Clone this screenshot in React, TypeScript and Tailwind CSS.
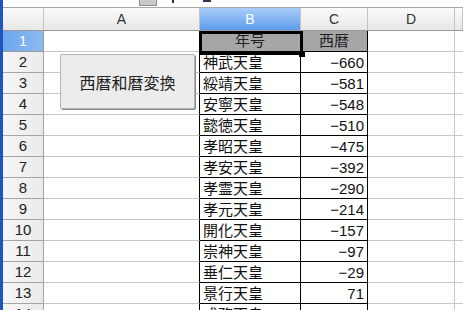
const rows: [string, string][] = [
  ["神武天皇", "−660"],
  ["綏靖天皇", "−581"],
  ["安寧天皇", "−548"],
  ["懿徳天皇", "−510"],
  ["孝昭天皇", "−475"],
  ["孝安天皇", "−392"],
  ["孝霊天皇", "−290"],
  ["孝元天皇", "−214"],
  ["開化天皇", "−157"],
  ["崇神天皇", "−97"],
  ["垂仁天皇", "−29"],
  ["景行天皇", "71"],
  ["成務天皇", "131"],
];

const hdr =
  "h-full flex items-center justify-center border-r border-[#c4c4c4] bg-gradient-to-b from-[#fbfbfb] to-[#e7e7e7] text-[14px] text-[#333]";

export default function App() {
  return (
    <div className="relative w-[463px] h-[310px] overflow-hidden bg-white flex font-['Liberation_Sans','Noto_Sans_CJK_JP',sans-serif]">
      <div className="w-[3px] shrink-0 bg-[#1f55bd]" />
      <div className="flex-1 flex flex-col">
        {/* cut-off toolbar */}
        <div className="relative h-[8px] shrink-0 border-b border-[#a8a8a8] bg-white">
          <span className="absolute left-[136px] top-0 w-[18px] h-[6px] bg-[#c8c8c8] border border-[#8c8c8c] border-t-0" />
          <span className="absolute left-[169px] top-0 w-[2px] h-[3px] bg-[#333]" />
          <span className="absolute left-[200px] top-0 w-[8px] h-[2px] bg-[#2a3a55]" />
        </div>

        {/* column headers */}
        <div className="flex h-[23px] shrink-0 border-b border-[#9a9a9a]">
          <div className={`w-[41px] ${hdr}`} />
          <div className={`w-[156px] ${hdr}`}>A</div>
          <div className="w-[101px] h-full flex items-center justify-center border-r border-[#c4c4c4] bg-gradient-to-b from-[#a9cdf8] to-[#5d9cec] text-[14px] text-white">
            B
          </div>
          <div className={`w-[67px] ${hdr}`}>C</div>
          <div className={`w-[87px] ${hdr}`}>D</div>
          <div className={`flex-1 ${hdr}`} />
        </div>

        {/* row 1 */}
        <div className="flex h-[21px] shrink-0">
          <div className="w-[41px] flex items-center justify-center border-r border-b border-[#9a9a9a] bg-gradient-to-r from-[#6fa6ee] to-[#8cbaf3] text-[15px] text-white">
            1
          </div>
          <div className="w-[156px] border-r border-b border-r-black border-b-[#c8c8c8]" />
          <div className="w-[101px] flex items-center justify-center bg-[#a6a6a6] border-r border-b border-black text-[15px] text-[#222]">
            年号
          </div>
          <div className="w-[67px] flex items-center justify-center bg-[#a6a6a6] border-r border-b border-black text-[15px] text-[#222]">
            西暦
          </div>
          <div className="w-[87px] border-r border-b border-[#c8c8c8]" />
          <div className="flex-1 border-b border-[#c8c8c8]" />
        </div>

        {rows.map(([name, year], i) => (
          <div key={name} className="flex h-[21px] shrink-0">
            <div className="w-[41px] flex items-center justify-center border-r border-b border-[#a4a4a4] bg-gradient-to-r from-[#f6f6f6] to-[#ebebeb] text-[15px] text-[#222]">
              {i + 2}
            </div>
            <div className="w-[156px] border-r border-b border-r-black border-b-[#c8c8c8]" />
            <div className="w-[101px] flex items-center pl-[3px] border-r border-b border-black text-[15px] leading-none text-[#111] whitespace-nowrap overflow-hidden">
              {name}
            </div>
            <div className="w-[67px] flex items-center justify-end pr-[3px] border-r border-b border-black text-[15px] leading-none text-[#111]">
              {year}
            </div>
            <div className="w-[87px] border-r border-b border-[#c8c8c8]" />
            <div className="flex-1 border-b border-[#c8c8c8]" />
          </div>
        ))}
      </div>

      {/* cell cursor on B1 */}
      <div className="absolute left-[199px] top-[31px] w-[104px] h-[24px] border-[3px] border-black pointer-events-none" />
      <div className="absolute left-[299px] top-[51px] w-[6px] h-[6px] bg-black" />

      {/* form button */}
      <button className="absolute left-[60px] top-[54px] w-[135px] h-[55px] bg-[#ececec] border border-[#b4b4b4] rounded-[2px] shadow-[1px_1px_0_#8a8a8a] text-[16px] text-[#222] font-['Noto_Sans_CJK_JP',sans-serif]">
        西暦和暦変換
      </button>
    </div>
  );
}
